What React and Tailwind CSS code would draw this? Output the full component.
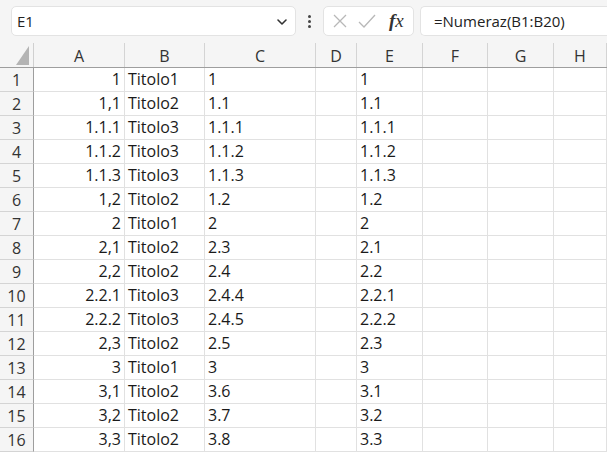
import React from "react";

const cols = [
  { k: "A", w: "w-[91px]", align: "right" },
  { k: "B", w: "w-[80px]", align: "left" },
  { k: "C", w: "w-[111px]", align: "left" },
  { k: "D", w: "w-[41px]", align: "left" },
  { k: "E", w: "w-[66px]", align: "left" },
  { k: "F", w: "w-[65px]", align: "left" },
  { k: "G", w: "w-[66px]", align: "left" },
  { k: "H", w: "flex-1", align: "left" },
];

const rows = [
  ["1", "Titolo1", "1", "", "1"],
  ["1,1", "Titolo2", "1.1", "", "1.1"],
  ["1.1.1", "Titolo3", "1.1.1", "", "1.1.1"],
  ["1.1.2", "Titolo3", "1.1.2", "", "1.1.2"],
  ["1.1.3", "Titolo3", "1.1.3", "", "1.1.3"],
  ["1,2", "Titolo2", "1.2", "", "1.2"],
  ["2", "Titolo1", "2", "", "2"],
  ["2,1", "Titolo2", "2.3", "", "2.1"],
  ["2,2", "Titolo2", "2.4", "", "2.2"],
  ["2.2.1", "Titolo3", "2.4.4", "", "2.2.1"],
  ["2.2.2", "Titolo3", "2.4.5", "", "2.2.2"],
  ["2,3", "Titolo2", "2.5", "", "2.3"],
  ["3", "Titolo1", "3", "", "3"],
  ["3,1", "Titolo2", "3.6", "", "3.1"],
  ["3,2", "Titolo2", "3.7", "", "3.2"],
  ["3,3", "Titolo2", "3.8", "", "3.3"],
];

export default function App() {
  return (
    <div
      className="w-[607px] h-[453px] overflow-hidden bg-white text-[#1a1a1a]"
      style={{ fontFamily: '"Open Sans", sans-serif' }}
    >
      {/* toolbar */}
      <div className="h-[43px] bg-[#f5f5f5] flex items-start pt-[6px]">
        <div className="ml-[11px] w-[285px] h-[30px] bg-white border border-[#e3e3e3] rounded-[5px] flex items-center justify-between pl-[5px] pr-[7px]">
          <span className="text-[15px] text-[#222]">E1</span>
          <svg width="12" height="8" viewBox="0 0 12 8" className="mt-[2px]">
            <path d="M2 2 L6 6 L10 2" fill="none" stroke="#333" strokeWidth="1.6" strokeLinecap="round" strokeLinejoin="round" />
          </svg>
        </div>
        <div className="w-[27px] h-[30px] flex flex-col items-center justify-center gap-[2px]">
          <span className="w-[3px] h-[3px] bg-[#444] rounded-full" />
          <span className="w-[3px] h-[3px] bg-[#444] rounded-full" />
          <span className="w-[3px] h-[3px] bg-[#444] rounded-full" />
        </div>
        <div className="w-[91px] h-[30px] bg-white border border-[#e3e3e3] rounded-[5px] flex items-center pl-[8px] gap-[10px]">
          <svg width="16" height="16" viewBox="0 0 16 16">
            <path d="M2 2 L14 14 M14 2 L2 14" stroke="#b8b8b8" strokeWidth="1.3" />
          </svg>
          <svg width="18" height="16" viewBox="0 0 18 16">
            <path d="M1 9 L6 14 L17 2" fill="none" stroke="#b8b8b8" strokeWidth="1.3" />
          </svg>
          <span
            className="text-[19px] italic text-[#333] leading-none ml-[3px] -mt-[2px]"
            style={{ fontFamily: '"Liberation Serif", "DejaVu Serif", serif' }}
          >
            <span className="font-bold">f</span>x
          </span>
        </div>
        <div className="ml-[6px] flex-1 h-[30px] bg-white border border-[#e3e3e3] rounded-l-[5px] border-r-0 flex items-center pl-[13px]">
          <span className="text-[15px] text-[#222]">=Numeraz(B1:B20)</span>
        </div>
      </div>

      {/* column headers */}
      <div className="flex h-[25px] bg-[#f5f5f5] border-b border-[#9e9e9e]">
        <div className="w-[34px] shrink-0 border-r border-[#d0d0d0] relative flex items-end justify-end">
          <svg width="14" height="19" viewBox="0 0 14 19" className="mr-[3px] mb-[2px]">
            <path d="M13 0 L13 19 L0 19 Z" fill="#b4b4b4" />
          </svg>
        </div>
        {cols.map((c) => (
          <div
            key={c.k}
            className={`${c.w} shrink-0 border-r border-[#d4d4d4] flex items-center justify-center text-[16px] text-[#333] pt-[1px]`}
          >
            {c.k}
          </div>
        ))}
      </div>

      {/* rows */}
      {rows.map((r, i) => (
        <div key={i} className="flex h-[24px]">
          <div className="w-[34px] shrink-0 bg-[#f5f5f5] border-r border-[#9e9e9e] border-b border-b-[#d4d4d4] flex items-center justify-center text-[16px] text-[#333]">
            {i + 1}
          </div>
          {cols.map((c, j) => (
            <div
              key={c.k}
              className={`${c.w} shrink-0 border-r border-b border-[#e1e1e1] flex items-end pb-[1px] px-[3px] text-[16px] leading-[22px] whitespace-nowrap overflow-hidden ${
                c.align === "right" ? "justify-end" : "justify-start"
              }`}
            >
              {r[j] || ""}
            </div>
          ))}
        </div>
      ))}
    </div>
  );
}
